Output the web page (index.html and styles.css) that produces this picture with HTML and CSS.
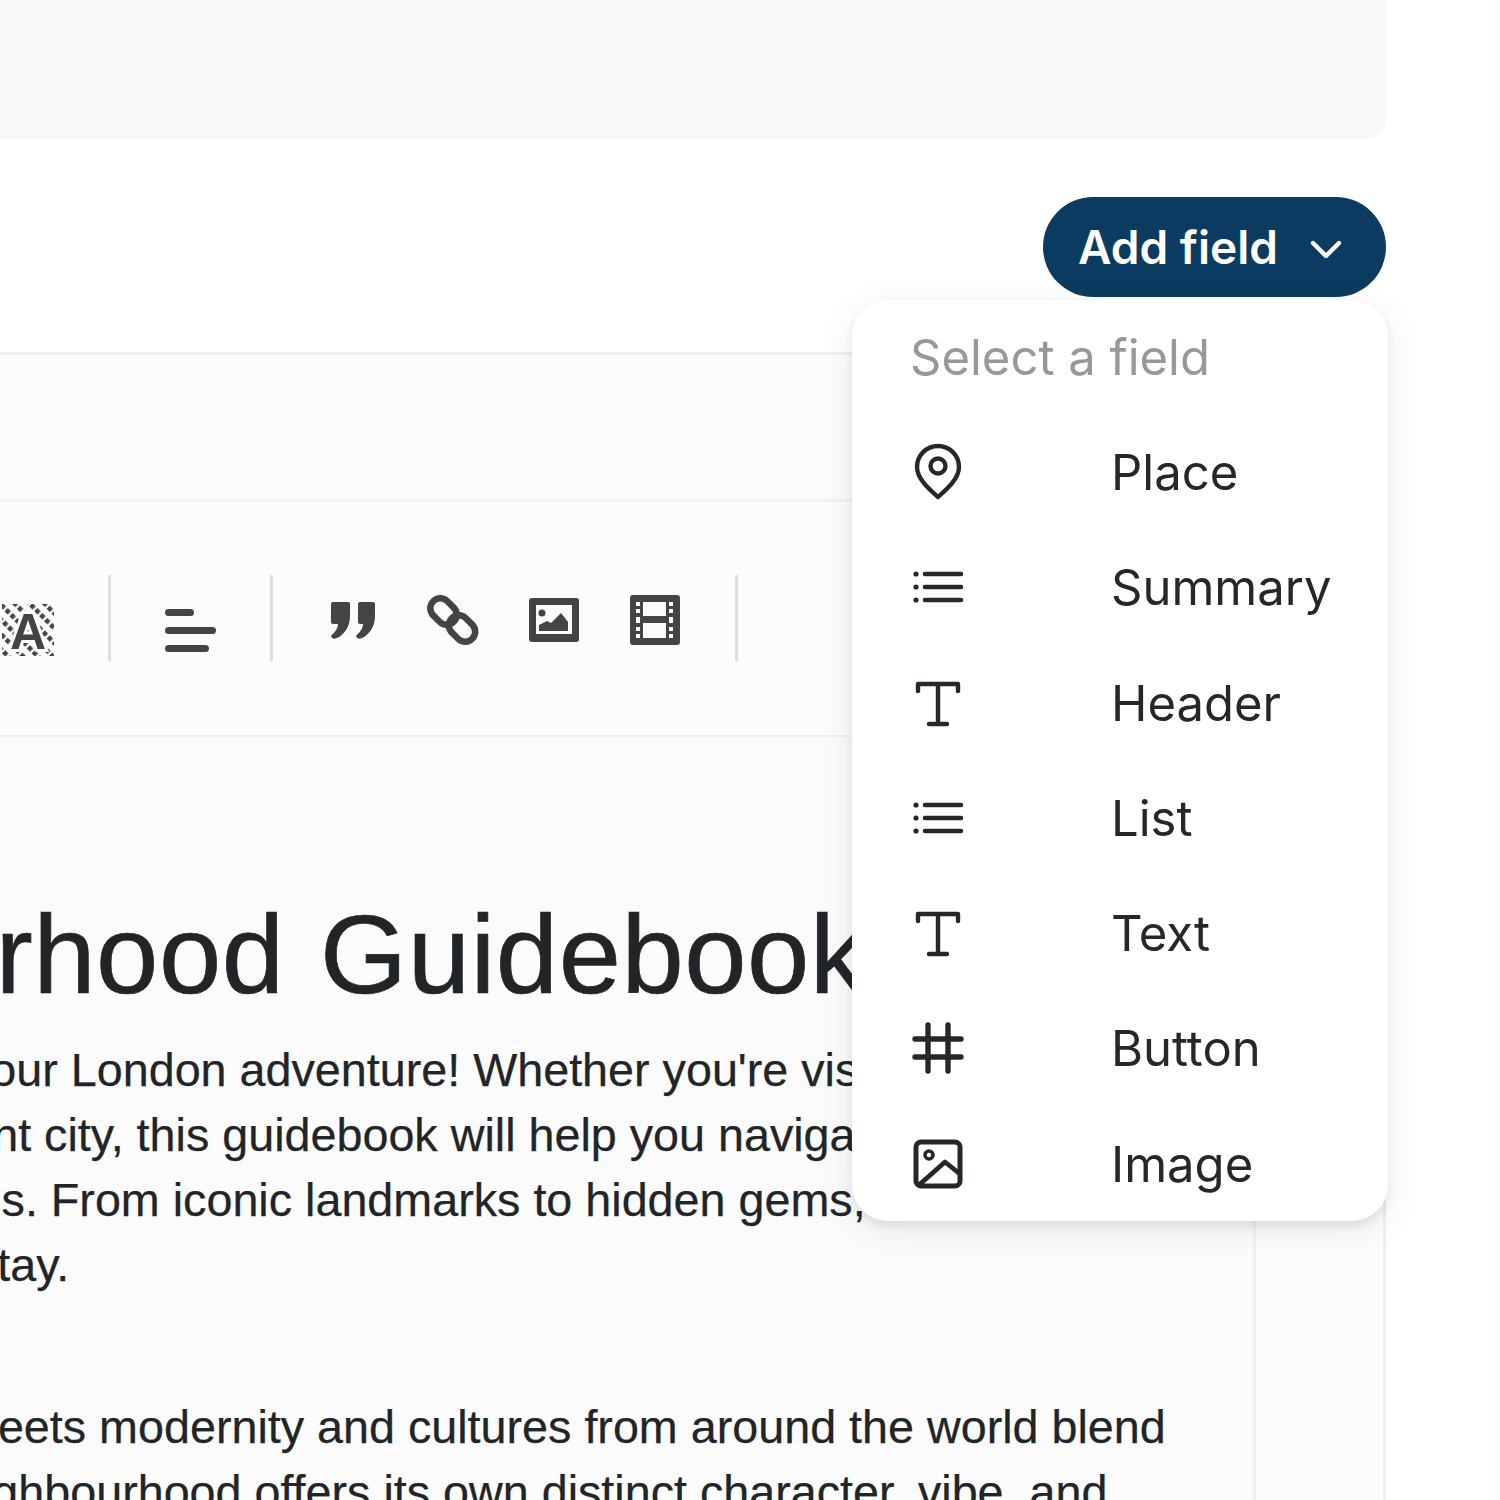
FILE: index.html
```html
<!DOCTYPE html>
<html lang="en">
<head>
<meta charset="utf-8">
<title>Add field</title>
<link rel="stylesheet" href="styles.css">
</head>
<body>
<div class="page">
  <div class="top-panel"></div>
  <div class="actions">
    <button class="add-btn" type="button">
      <span>Add field</span>
      <svg class="chev" width="32" height="20" viewBox="0 0 32 20"><path d="M3 4l13 13L29 4" fill="none" stroke="#fff" stroke-width="4.4" stroke-linecap="round" stroke-linejoin="round"/></svg>
    </button>
  </div>
  <div class="editor">
    <div class="editor-head"></div>
    <div class="toolbar">
      <svg class="tool" width="52" height="72" viewBox="0 0 52 72">
        <defs><pattern id="hatch" width="10.5" height="7" patternUnits="userSpaceOnUse" patternTransform="rotate(-45)"><rect width="4.6" height="4.6" fill="#444"/></pattern></defs>
        <rect x="0" y="10" width="52" height="52" fill="url(#hatch)"/>
        <text class="tool-a" x="26" y="55" text-anchor="middle">A</text>
      </svg>
      <i class="sep"></i>
      <svg class="tool" width="52" height="72" viewBox="0 0 52 72"><g fill="#444"><rect x="1" y="15" width="29" height="7" rx="3.5"/><rect x="1" y="33" width="51" height="7" rx="3.5"/><rect x="1" y="51" width="44" height="7" rx="3.5"/></g></svg>
      <i class="sep"></i>
      <div class="tool-group">
        <svg class="tool" width="52" height="72" viewBox="0 0 52 72"><g fill="#444"><path d="M7 8h15q2 0 2 2v12c0 11-6 19-13 22q-5 2-6-2c3-3 7-7 7-12H7q-2 0-2-2V10q0-2 2-2z"/><path d="M32 8h15q2 0 2 2v12c0 11-6 19-13 22q-5 2-6-2c3-3 7-7 7-12h-3q-2 0-2-2V10q0-2 2-2z"/></g></svg>
        <svg class="tool" width="52" height="72" viewBox="0 0 52 72"><g fill="none" stroke="#444" stroke-width="6.5"><rect x="2" y="7.5" width="29" height="20" rx="10" transform="rotate(45 16.5 17.5)"/><rect x="20.5" y="24.5" width="29" height="20" rx="10" transform="rotate(45 35 34.5)"/></g></svg>
        <svg class="tool" width="52" height="72" viewBox="0 0 52 72"><rect x="1" y="4" width="50" height="44" rx="3" fill="#444"/><rect x="8" y="11" width="36" height="29" fill="#fcfcfc"/><circle cx="14" cy="19" r="3.5" fill="#444"/><path d="M11 37v-6l8-4 4 2 10-10 7 9v9z" fill="#444"/></svg>
        <svg class="tool" width="52" height="72" viewBox="0 0 52 72"><rect x="1" y="1" width="50" height="50" rx="3" fill="#444"/><g fill="#fcfcfc"><rect x="14" y="8" width="23" height="14"/><rect x="14" y="29" width="23" height="15"/><rect x="7" y="8" width="4" height="4"/><rect x="7" y="15" width="4" height="4"/><rect x="7" y="23" width="4" height="6"/><rect x="7" y="33" width="4" height="4"/><rect x="7" y="40" width="4" height="4"/><rect x="40" y="8" width="4" height="4"/><rect x="40" y="15" width="4" height="4"/><rect x="40" y="23" width="4" height="6"/><rect x="40" y="33" width="4" height="4"/><rect x="40" y="40" width="4" height="4"/></g></svg>
      </div>
      <i class="sep"></i>
    </div>
    <div class="content">
      <div class="doc">
        <h1 class="title">Neighbourhood Guidebook</h1>
        <p class="para">
          <span class="line l-your">your London adventure! Whether you're visiting for the first time</span>
          <span class="line l-vibrant">vibrant city, this guidebook will help you navigate its many streets</span>
          <span class="line l-hoods">neighbourhoods. From iconic landmarks to hidden gems, we have it all</span>
          <span class="line l-stay">stay.</span>
        </p>
        <p class="para para-two">
          <span class="line l-meets">meets modernity and cultures from around the world blend</span>
          <span class="line l-neigh">neighbourhood offers its own distinct character, vibe, and</span>
        </p>
      </div>
    </div>
  </div>
  <div class="menu">
    <div class="menu-title">Select a field</div>
    <div class="menu-item">
      <svg class="mi" width="56" height="60" viewBox="0 0 56 60"><path d="M28 55C20 48 7 37 7 25a21 21 0 0 1 42 0c0 12-13 23-21 30z" fill="none" stroke="#25282b" stroke-width="4.4" stroke-linejoin="round"/><circle cx="28" cy="24" r="7.5" fill="none" stroke="#25282b" stroke-width="4.4"/></svg>
      <span class="mi-label">Place</span>
    </div>
    <div class="menu-item">
      <svg class="mi" width="56" height="56" viewBox="0 0 56 56"><g fill="none" stroke="#25282b" stroke-width="4.6" stroke-linecap="round"><path d="M15 15h36M15 28h36M15 41h36"/></g><g fill="#25282b"><circle cx="6" cy="15" r="2.6"/><circle cx="6" cy="28" r="2.6"/><circle cx="6" cy="41" r="2.6"/></g></svg>
      <span class="mi-label">Summary</span>
    </div>
    <div class="menu-item">
      <svg class="mi" width="56" height="56" viewBox="0 0 56 56"><path d="M8 16v-7h40v7M28 9v40M19 49h18" fill="none" stroke="#25282b" stroke-width="4.4" stroke-linecap="round" stroke-linejoin="round"/></svg>
      <span class="mi-label">Header</span>
    </div>
    <div class="menu-item">
      <svg class="mi" width="56" height="56" viewBox="0 0 56 56"><g fill="none" stroke="#25282b" stroke-width="4.6" stroke-linecap="round"><path d="M15 15h36M15 28h36M15 41h36"/></g><g fill="#25282b"><circle cx="6" cy="15" r="2.6"/><circle cx="6" cy="28" r="2.6"/><circle cx="6" cy="41" r="2.6"/></g></svg>
      <span class="mi-label">List</span>
    </div>
    <div class="menu-item">
      <svg class="mi" width="56" height="56" viewBox="0 0 56 56"><path d="M8 16v-7h40v7M28 9v40M19 49h18" fill="none" stroke="#25282b" stroke-width="4.4" stroke-linecap="round" stroke-linejoin="round"/></svg>
      <span class="mi-label">Text</span>
    </div>
    <div class="menu-item">
      <svg class="mi" width="56" height="56" viewBox="0 0 56 56"><path d="M5 19h46M5 37h46M18 5v46M38 5v46" fill="none" stroke="#25282b" stroke-width="5.4" stroke-linecap="round"/></svg>
      <span class="mi-label">Button</span>
    </div>
    <div class="menu-item">
      <svg class="mi" width="56" height="56" viewBox="0 0 56 56"><rect x="6" y="6" width="44" height="44" rx="5" fill="none" stroke="#25282b" stroke-width="5"/><circle cx="19" cy="19" r="4" fill="none" stroke="#25282b" stroke-width="3.6"/><path d="M9 49l26-23 15 12" fill="none" stroke="#25282b" stroke-width="4.8" stroke-linejoin="round"/></svg>
      <span class="mi-label">Image</span>
    </div>
  </div>
</div>
</body>
</html>
```

FILE: styles.css
```css
* { box-sizing: border-box; }
html, body { margin: 0; padding: 0; background: #fff; }
body { width: 1500px; height: 1500px; overflow: hidden; }
.page {
  position: relative;
  width: 1500px;
  height: 1500px;
  overflow: hidden;
  background: #fff;
  border-right: 5px solid #fbfbfb;
  font-family: Inter, "Liberation Sans", sans-serif;
}
.top-panel {
  width: 1386px;
  height: 139px;
  background: #f8f8f8;
  border-bottom-right-radius: 20px;
}
.actions {
  display: flex;
  justify-content: flex-end;
  width: 1386px;
  height: 213px;
  padding-top: 58px;
}
.add-btn {
  display: flex;
  align-items: center;
  justify-content: space-between;
  width: 343px;
  height: 100px;
  padding: 0 44px 0 35px;
  border: 0;
  border-radius: 50px;
  background: #0b3b60;
  color: #fff;
  font-family: Inter, sans-serif;
  font-size: 46px;
  font-weight: 600;
}
.chev { display: block; margin-top: 3px; }
.editor {
  width: 1386px;
  height: 1148px;
  background: #fcfcfc;
  border-top: 3px solid #efefef;
  border-right: 3px solid #efefef;
}
.editor-head {
  height: 147px;
  border-bottom: 3px solid #f3f3f3;
}
.toolbar {
  display: flex;
  align-items: flex-start;
  gap: 54px;
  height: 235px;
  padding-top: 73px;
  padding-left: 2px;
  border-bottom: 2px solid #f0f0f0;
}
.tool { display: block; flex: none; margin-top: 19px; }
.tool-group { display: flex; gap: 49px; }
.tool-a {
  font-family: "Liberation Sans", sans-serif;
  font-weight: 700;
  font-size: 50px;
  fill: #444;
  stroke: #fcfcfc;
  stroke-width: 6px;
  paint-order: stroke;
}
.sep { display: block; flex: none; width: 3px; height: 86px; margin-right: -1px; background: #dedede; }
.content { height: 763px; }
.doc {
  width: 1256px;
  height: 100%;
  padding-top: 135px;
  border-right: 3px solid #f1f1f1;
  background: #fbfbfb;
  overflow: hidden;
  color: #222528;
  font-family: "Liberation Sans", Arial, sans-serif;
}
.title {
  margin: 0 0 0 -488px;
  font-size: 112px;
  line-height: 166px;
  font-weight: 400;
  letter-spacing: .5px;
  word-spacing: 4px;
  white-space: nowrap;
  -webkit-text-stroke: .7px #222528;
}
.para { margin: 0; font-size: 46.7px; line-height: 65px; -webkit-text-stroke: .25px #222528; }
.para-two { margin-top: 97px; }
.line { display: block; white-space: nowrap; }
.l-your { margin-left: -33px; }
.l-vibrant { margin-left: -109px; }
.l-hoods { margin-left: -310px; }
.l-stay { margin-left: -26px; }
.l-meets { margin-left: -41px; }
.l-neigh { margin-left: -70px; }
.menu {
  position: absolute;
  left: 852px;
  top: 300px;
  width: 536px;
  height: 921px;
  background: #fff;
  border-radius: 36px;
  box-shadow: 0 6px 10px rgba(30, 40, 60, .09), 0 8px 36px rgba(30, 40, 60, .08);
}
.menu-title {
  height: 114.3px;
  padding: 28px 0 0 58px;
  color: #96989b;
  font-size: 49px;
  line-height: 60px;
}
.menu-item {
  display: grid;
  grid-template-columns: 201px 1fr;
  align-items: center;
  height: 115.3px;
  padding-left: 58px;
  color: #25282b;
  font-size: 49px;
  line-height: 60px;
}
.mi { display: block; }
.mi-label { padding-top: 2px; }
```
